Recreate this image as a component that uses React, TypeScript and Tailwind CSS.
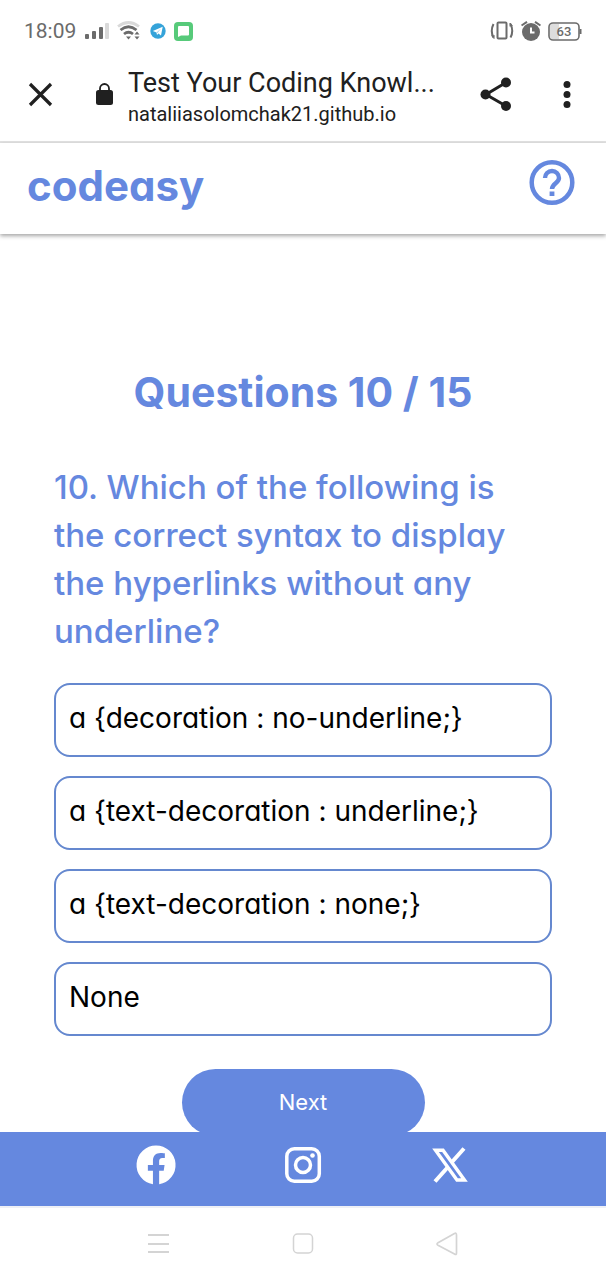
import React from "react";

const answers = [
  "a {decoration : no-underline;}",
  "a {text-decoration : underline;}",
  "a {text-decoration : none;}",
  "None",
];

function StatusBar() {
  return (
    <div className="flex h-[62px] items-center justify-between px-6 text-[#6b6b6b]">
      <div className="flex items-center">
        <span className="w-[61px] text-[21px] leading-6">18:09</span>
        <svg width="24" height="18" viewBox="0 0 24 18" fill="currentColor" aria-hidden="true">
          <rect x="0" y="12" width="4" height="5" rx="1" />
          <rect x="7" y="9" width="4" height="8" rx="1" />
          <rect x="14" y="5" width="4" height="12" rx="1" />
          <rect x="20" y="1" width="4" height="16" rx="1" fill="#d9d9d9" />
        </svg>
        <svg className="ml-2" width="24" height="20" viewBox="0 0 24 20" fill="none" strokeWidth="2.800" aria-hidden="true">
          <path d="M1 5.500Q11.500-2.500 22 5.500" stroke="#d9d9d9" />
          <path d="M3.500 9Q11.500 2.500 19.500 9" stroke="currentColor" />
          <path d="M7 13Q11.500 9.500 16 13" stroke="currentColor" />
          <path d="M9 15.500h5l-2.500 3zM17.500 13.500l2.500-3 2.500 3zM17.500 15.500l2.500 3 2.500-3z" fill="currentColor" />
        </svg>
        <svg className="ml-[9px]" width="16" height="16" viewBox="0 0 16 16" aria-hidden="true">
          <circle cx="8" cy="8" r="7.700" fill="#35a3d9" />
          <path d="M2.800 8 12.700 3.700 11 12.500 8.400 10.500 7 12 6.500 9.500z" fill="#fff" />
          <path d="M6.500 9.500 11 5.500 7.500 10z" fill="#9bcbe5" />
        </svg>
        <svg className="ml-2" width="19" height="19" viewBox="0 0 19 19" aria-hidden="true">
          <rect width="19" height="19" rx="4" fill="#57ca7a" />
          <path d="M5 4h9q1 0 1 1v7.500q0 1-1 1H7L4 15V5q0-1 1-1z" fill="#fff" />
        </svg>
      </div>
      <div className="flex items-center gap-[7px]">
        <svg width="24" height="20" viewBox="0 0 24 20" fill="none" stroke="currentColor" strokeWidth="2" aria-hidden="true">
          <rect x="7.500" y="1.500" width="9" height="16" rx="1" />
          <path d="M3.500 3Q0 10 3.500 16.500M20.500 3Q24 10 20.500 16.500" />
          <path d="M1.500 14.500 4 17.500V14M22.500 5 20 2v3.500" strokeWidth="1" />
        </svg>
        <svg width="20" height="20" viewBox="0 0 20 20" fill="none" aria-hidden="true">
          <circle cx="10" cy="11" r="9" fill="currentColor" />
          <path d="M.5 4.500 6 .8M19.500 4.500 14 .8" stroke="currentColor" strokeWidth="2" />
          <path d="M10 6.500v5h3.500" stroke="#fff" strokeWidth="2" />
        </svg>
        <svg width="34" height="19" viewBox="0 0 34 19" fill="none" aria-label="Battery 63 percent">
          <path d="M4 2h7v15H4q-2 0-2-2V4q0-2 2-2z" fill="#ddd" />
          <rect x="1" y="1" width="30" height="17" rx="4" stroke="currentColor" strokeWidth="1.600" />
          <path d="M32.500 7v5" stroke="currentColor" strokeWidth="2" />
          <text x="16" y="14" textAnchor="middle" fontSize="13" fontWeight="500" fill="currentColor">63</text>
        </svg>
      </div>
    </div>
  );
}

function BrowserBar() {
  return (
    <div className="flex h-[81px] items-start border-b-2 border-[#e2e2e2] pl-7 pr-[30px] text-[#202020]">
      <button aria-label="Close" className="mt-5 shrink-0">
        <svg width="25" height="25" viewBox="0 0 25 25" fill="none" stroke="currentColor" strokeWidth="3.200">
          <path d="M2 2 23 23M23 2 2 23" />
        </svg>
      </button>
      <svg className="mt-5 ml-[43px] shrink-0" width="17" height="24" viewBox="0 0 17 24" fill="none" aria-hidden="true">
        <rect y="8" width="17" height="15" rx="2.500" fill="currentColor" />
        <path d="M4 9V6.500a4.500 4.500 0 0 1 9 0V9" stroke="currentColor" strokeWidth="1.800" />
      </svg>
      <div className="ml-[15px] min-w-0 flex-1 pt-[5px]">
        <p className="text-[27px] leading-8 whitespace-nowrap">Test Your Coding Knowl...</p>
        <p className="text-[20px] leading-[30px] whitespace-nowrap">nataliiasolomchak21.github.io</p>
      </div>
      <button aria-label="Share" className="mt-[15px] shrink-0">
        <svg width="32" height="34" viewBox="0 0 32 34" fill="currentColor">
          <path d="M26 5.500 6 17.500 26 29" fill="none" stroke="currentColor" strokeWidth="3" />
          <circle cx="26" cy="5.500" r="5" />
          <circle cx="5.500" cy="17.500" r="5" />
          <circle cx="26" cy="29" r="5" />
        </svg>
      </button>
      <button aria-label="More options" className="mt-[18px] ml-[46px] shrink-0">
        <svg width="18" height="30" viewBox="0 0 18 30" fill="currentColor">
          <circle cx="9" cy="4.500" r="3.500" />
          <circle cx="9" cy="14.500" r="3.500" />
          <circle cx="9" cy="24.500" r="3.500" />
        </svg>
      </button>
    </div>
  );
}

function Footer() {
  return (
    <footer className="relative flex h-[74px] items-start justify-between bg-[#6588df] px-[135px] pt-3 text-white">
      <a href="#facebook" aria-label="Facebook">
        <svg width="42" height="42" viewBox="0 0 24 24" fill="currentColor">
          <path d="M12 .8a11.200 11.200 0 0 0-1.750 22.250v-7.800H7.350V12h2.900V9.500c0-2.850 1.700-4.400 4.300-4.400 1.200 0 2.500.2 2.500.2V8h-1.400c-1.400 0-1.850.9-1.850 1.750V12h3.100l-.5 3.250h-2.600v7.800A11.200 11.200 0 0 0 12 .8z" />
        </svg>
      </a>
      <a href="#instagram" aria-label="Instagram">
        <svg width="42" height="42" viewBox="0 0 42 42" fill="none" stroke="currentColor" strokeWidth="3.500">
          <rect x="4.800" y="4.800" width="32.500" height="32.500" rx="7.500" />
          <circle cx="21" cy="21" r="7.500" />
          <circle cx="30.500" cy="11.500" r="2.300" fill="currentColor" stroke="none" />
        </svg>
      </a>
      <a href="#x" aria-label="X">
        <svg width="42" height="42" viewBox="0 0 42 42" fill="none" stroke="currentColor">
          <path d="M6.500 6.200h7.500L35.500 36h-7.500z" strokeWidth="3.400" />
          <path d="M35 4.500 23 18M18.500 23.500 6 37.500" strokeWidth="4" />
        </svg>
      </a>
    </footer>
  );
}

function NavigationBar() {
  return (
    <nav className="flex h-[74px] items-center justify-between border-t-2 border-[#eef0f6] px-[146px] text-[#d4d4d4]">
      <button aria-label="Recent apps">
        <svg width="24" height="24" viewBox="0 0 24 24" fill="none" stroke="currentColor" strokeWidth="2">
          <path d="M2 3h21M2 12h21M2 20h21" />
        </svg>
      </button>
      <button aria-label="Home">
        <svg width="24" height="24" viewBox="0 0 24 24" fill="none" stroke="currentColor" strokeWidth="1.500">
          <rect x="2.500" y="2" width="19" height="19" rx="4" />
        </svg>
      </button>
      <button aria-label="Back">
        <svg width="24" height="24" viewBox="0 0 24 24" fill="none" stroke="currentColor" strokeWidth="1.700" strokeLinejoin="round">
          <path d="M18.500 1.500Q20.500.5 20.500 3v18q0 2.300-2 1L2 13.200q-2-1.200 0-2.400z" />
        </svg>
      </button>
    </nav>
  );
}

export default function App() {
  return (
    <div className="flex min-h-screen flex-col bg-white font-['Roboto',sans-serif]">
      <StatusBar />
      <BrowserBar />
      <div className="flex flex-1 flex-col font-['Inter',sans-serif] [font-feature-settings:'cv11']">
        <header className="flex h-[91px] items-start justify-between pt-4 pr-[30px] pl-[27px] text-[#6588df] shadow-[0_2px_4px_rgba(0,0,0,0.35)]">
          <a href="#home" className="text-[42px] leading-[54px] font-bold">codeasy</a>
          <button aria-label="Help">
            <svg width="48" height="48" viewBox="0 0 48 48" fill="none" stroke="currentColor">
              <circle cx="24" cy="23.500" r="20.300" strokeWidth="4.500" />
              <path d="M17 19a7 7 0 0 1 14 0c0 5-7 5.500-7 11" strokeWidth="4.400" />
              <path d="M24 32.500v4.500" strokeWidth="4.800" />
            </svg>
          </button>
        </header>
        <main className="flex flex-1 flex-col px-[54px] pt-[127px]">
          <h1 className="text-center text-[41px] leading-[62px] font-bold text-[#6588df]">Questions 10 / 15</h1>
          <h2 className="mt-10 text-[33px] leading-[48px] font-medium text-[#6588df]">
            10. Which of the following is the correct syntax to display the hyperlinks without any underline?
          </h2>
          <div className="mt-7 flex flex-col gap-[19px]">
            {answers.map((answer) => (
              <button key={answer} className="h-[74px] rounded-2xl border-2 border-[#6588cf] px-[13px] pb-1 text-left text-[28px] text-black">
                {answer}
              </button>
            ))}
          </div>
          <button className="mt-[33px] -mb-1 h-[67px] w-[243px] self-center rounded-full bg-[#6588df] text-[22px] text-white">Next</button>
        </main>
        <Footer />
      </div>
      <NavigationBar />
    </div>
  );
}
